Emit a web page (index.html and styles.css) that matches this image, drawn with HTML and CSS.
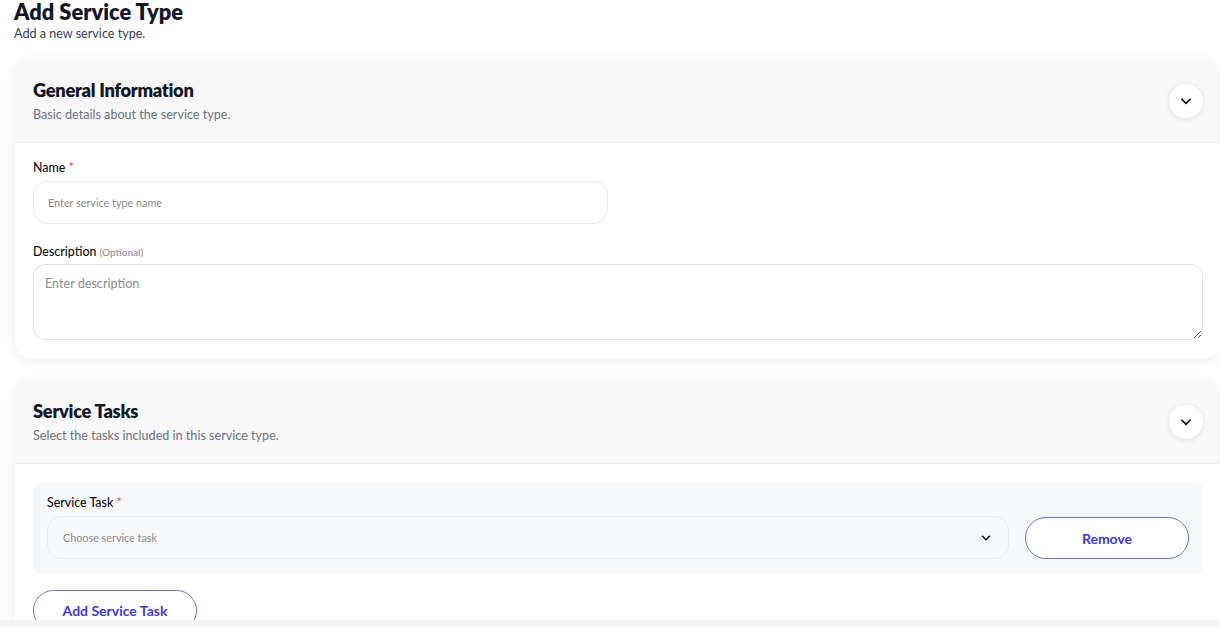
FILE: index.html
```html
<!DOCTYPE html>
<html lang="en">
<head>
  <meta charset="UTF-8">
  <meta name="viewport" content="width=device-width, initial-scale=1.0">
  <title>Add Service Type</title>
  <link rel="stylesheet" href="styles.css">
</head>
<body>

  <main class="page">
    <header class="page-head">
      <h1>Add Service Type</h1>
      <p>Add a new service type.</p>
    </header>

    <section class="card">
      <div class="card-head">
        <div>
          <h2>General Information</h2>
          <p>Basic details about the service type.</p>
        </div>
        <button class="toggle" type="button">
          <svg width="14" height="14" viewBox="0 0 24 24" fill="none" stroke="currentColor" stroke-width="3" stroke-linecap="round" stroke-linejoin="round"><path d="M5 9l7 7 7-7"/></svg>
        </button>
      </div>
      <div class="card-body">
        <div class="field">
          <label for="name">Name <span class="req">*</span></label>
          <input type="text" id="name" class="input input-name" placeholder="Enter service type name">
        </div>
        <div class="field">
          <label for="description">Description <span class="opt">(Optional)</span></label>
          <textarea id="description" class="textarea" placeholder="Enter description"></textarea>
        </div>
      </div>
    </section>

    <section class="card">
      <div class="card-head">
        <div>
          <h2>Service Tasks</h2>
          <p>Select the tasks included in this service type.</p>
        </div>
        <button class="toggle" type="button">
          <svg width="14" height="14" viewBox="0 0 24 24" fill="none" stroke="currentColor" stroke-width="3" stroke-linecap="round" stroke-linejoin="round"><path d="M5 9l7 7 7-7"/></svg>
        </button>
      </div>
      <div class="card-body tasks-body">
        <div class="task-box">
          <div class="task-field">
            <label>Service Task <span class="req">*</span></label>
            <div class="select">
              <span>Choose service task</span>
              <svg width="14" height="14" viewBox="0 0 24 24" fill="none" stroke="currentColor" stroke-width="2.5" stroke-linecap="round" stroke-linejoin="round"><path d="M6 9l6 6 6-6"/></svg>
            </div>
          </div>
          <button class="btn-outline btn-remove" type="button">Remove</button>
        </div>
        <div>
          <button class="btn-outline" type="button">Add Service Task</button>
        </div>
      </div>
    </section>
  </main>

  <div class="footer-bar"></div>

</body>
</html>
```

FILE: styles.css
```css
body {
  font-family: Lato, "Noto Sans", sans-serif;
  margin: 0;
  padding: 0;
  background-color: #ffffff;
  color: #111827;
  overflow: hidden;
}

.page {
  display: flex;
  flex-direction: column;
  gap: 22px;
  padding-left: 15px;
}

.page-head {
  margin-left: -1px;
  margin-bottom: -5px;
}

.page-head h1 {
  margin: 0;
  font-size: 21.8px;
  line-height: 24px;
  font-weight: 800;
  color: #111827;
}

.page-head p {
  margin: 2px 0 0;
  font-size: 12.6px;
  line-height: 16px;
  color: #374151;
}

.card {
  width: 1205px;
  background: #fff;
  border-radius: 16px;
  box-shadow: 0 2px 14px rgba(0, 0, 0, 0.07);
  overflow: hidden;
}

.card-head {
  display: flex;
  align-items: center;
  justify-content: space-between;
  background: #f8f8f8;
  border-bottom: 1px solid #ececec;
  padding: 19px 17px 19px 18px;
}

.card-head h2 {
  margin: 0;
  font-size: 18.3px;
  line-height: 24px;
  font-weight: 800;
  letter-spacing: -0.3px;
  color: #111827;
}

.card-head p {
  margin: 5px 0 0;
  font-size: 12.6px;
  line-height: 16px;
  color: #6b7280;
}

.toggle {
  width: 34px;
  height: 34px;
  border-radius: 50%;
  border: none;
  background: #fff;
  box-shadow: 0 1px 6px rgba(0, 0, 0, 0.1);
  display: flex;
  align-items: center;
  justify-content: center;
  color: #111;
  padding: 0;
}

.card-body {
  display: flex;
  flex-direction: column;
  gap: 16px;
  padding: 17px 17px 18px 18px;
}

.field {
  display: flex;
  flex-direction: column;
  gap: 5px;
}

.field + .field {
  margin-top: 4px;
}

label {
  font-size: 12.4px;
  line-height: 16px;
  font-weight: 500;
  color: #111;
}

.req {
  color: #ef4444;
}

.opt {
  font-size: 10px;
  color: #8a8f98;
}

.input {
  box-sizing: border-box;
  height: 43px;
  border: 1px solid #ebebeb;
  border-radius: 14px;
  padding: 0 14px;
  font-family: inherit;
  font-size: 10.8px;
  color: #111;
  outline: none;
}

.input-name {
  width: 575px;
}

.input::placeholder,
.textarea::placeholder {
  color: #8b8b8b;
}

.textarea {
  box-sizing: border-box;
  width: 100%;
  height: 76px;
  margin-top: -1px;
  border: 1px solid #e5e5e5;
  border-radius: 12px;
  padding: 11px 11px;
  font-family: inherit;
  font-size: 12.6px;
  outline: none;
}

.tasks-body {
  padding-top: 19px;
}

.task-box {
  display: flex;
  align-items: flex-end;
  gap: 16px;
  background: #f7f8fa;
  border-radius: 8px;
  padding: 12px 14px 15px 14px;
}

.task-field {
  flex: 1;
  display: flex;
  flex-direction: column;
  gap: 5px;
}

.select {
  box-sizing: border-box;
  height: 43px;
  border: 1px solid #ececec;
  border-radius: 14px;
  display: flex;
  align-items: center;
  justify-content: space-between;
  padding: 0 15px;
  font-size: 10.8px;
  color: #8b8b8b;
}

.select svg {
  color: #111;
}

.btn-outline {
  box-sizing: border-box;
  width: 164px;
  height: 41px;
  border: 1px solid #6e6cf2;
  border-radius: 21px;
  background: #fff;
  color: #3d35f2;
  font-family: inherit;
  font-size: 14px;
  font-weight: 700;
  cursor: pointer;
}

.btn-remove {
  height: 42px;
  margin-bottom: 0;
}

.footer-bar {
  position: fixed;
  left: 0;
  right: 0;
  bottom: 0;
  height: 7px;
  background: #f5f5f5;
}
```
